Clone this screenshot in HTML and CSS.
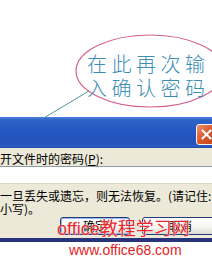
FILE: index.html
```html
<!DOCTYPE html>
<html>
<head>
<meta charset="utf-8">
<link rel="stylesheet" href="styles.css">
</head>
<body>
<div class="page">
  <div class="top"></div>
  <div class="dialog">
    <div class="titlebar">
      <div class="close">
        <svg width="21" height="21" viewBox="0 0 21 21"><path d="M6 6 L15 15 M15 6 L6 15" stroke="#fff" stroke-width="2.2" stroke-linecap="round"/></svg>
      </div>
    </div>
    <div class="body">
      <div class="label">开文件时的密码(<u>P</u>):</div>
      <div class="input"></div>
      <div class="msg">一旦丢失或遗忘，则无法恢复。(请记住:<br>小写)。</div>
      <div class="buttons">
        <div class="btn btn-default"><span>确定</span></div>
        <div class="btn"><span>取消</span></div>
      </div>
    </div>
  </div>
  <div class="site">www.office68.com</div>

  <svg class="annot-shape" width="212" height="120" viewBox="0 0 212 120">
    <ellipse cx="150" cy="71" rx="74" ry="36" fill="none" stroke="#d2608e" stroke-width="1.2"/>
    <line x1="89" y1="91" x2="42" y2="119" stroke="#4f9a9c" stroke-width="1"/>
  </svg>
  <div class="annot-text">在此再次输<br>入确认密码</div>
  <div class="watermark">office教程学习网</div>
</div>
</body>
</html>
```

FILE: styles.css
```css
html, body {
  margin: 0;
  padding: 0;
  background: #fff;
}
.page {
  position: relative;
  width: 212px;
  height: 267px;
  overflow: hidden;
  font-family: "Noto Sans CJK SC", "Liberation Sans", sans-serif;
}
.top {
  height: 117px;
}
.titlebar {
  height: 31px;
  background: linear-gradient(#4a80dc 0px, #2e62c8 3px, #2457c0 14px, #2253bb 26px, #2c5cc2 29px, #1f4ca8 31px);
  display: flex;
  justify-content: flex-end;
  padding-top: 7px;
  box-sizing: border-box;
}
.close {
  width: 21px;
  height: 21px;
  margin-right: -5px;
  border: 1px solid #f4f4f4;
  border-radius: 3px;
  background: linear-gradient(135deg, #f0916a, #d8562c 50%, #c2441c);
  box-sizing: border-box;
  display: flex;
  align-items: center;
  justify-content: center;
}
.close svg {
  display: block;
  width: 19px;
  height: 19px;
}
.body {
  background: #ece9d8;
  padding-top: 4px;
  height: 90px;
  box-sizing: border-box;
  border-bottom: 4px solid #27337a;
  height: 94px;
  font-size: 12px;
  color: #000;
}
.label {
  line-height: 14px;
  height: 14px;
  white-space: nowrap;
}
.input {
  height: 18px;
  box-sizing: border-box;
  background: #fff;
  border-top: 1px solid #8a9aa8;
  border-bottom: 1px solid #d8d6c8;
  margin-top: 0;
}
.msg {
  margin-top: 6px;
  line-height: 12.5px;
  white-space: nowrap;
}
.buttons {
  display: flex;
  gap: 12px;
  margin-top: 2px;
  margin-left: 60px;
}
.btn {
  width: 70px;
  height: 18px;
  flex: none;
  box-sizing: border-box;
  border: 1px solid #1f3d78;
  border-radius: 3px;
  background: linear-gradient(#ffffff, #f4f4f0 60%, #dcdad0);
  display: flex;
  align-items: center;
  justify-content: center;
  font-size: 12px;
  line-height: 14px;
}
.btn + .btn {
  width: 76px;
}
.btn-default {
  box-shadow: inset 0 0 0 1px #9ab8ec;
}
.site {
  margin-left: 69px;
  font-family: "Liberation Sans", Arial, sans-serif;
  font-size: 14px;
  line-height: 16px;
  color: #e02424;
  white-space: nowrap;
}
.annot-shape {
  position: absolute;
  left: 0;
  top: 0;
}
.annot-text {
  position: absolute;
  left: 87px;
  top: 52px;
  font-family: "Noto Sans CJK SC", sans-serif;
  font-weight: 300;
  font-size: 20px;
  line-height: 24px;
  letter-spacing: 4.5px;
  color: #3c8db6;
  white-space: nowrap;
}
.watermark {
  position: absolute;
  left: 57px;
  top: 220px;
  font-family: "Liberation Sans", "Noto Sans CJK SC", sans-serif;
  font-size: 18px;
  line-height: 18px;
  color: #e8282c;
  white-space: nowrap;
  text-shadow: 0 0 1px #fff, 0 0 1px #fff;
}
```
